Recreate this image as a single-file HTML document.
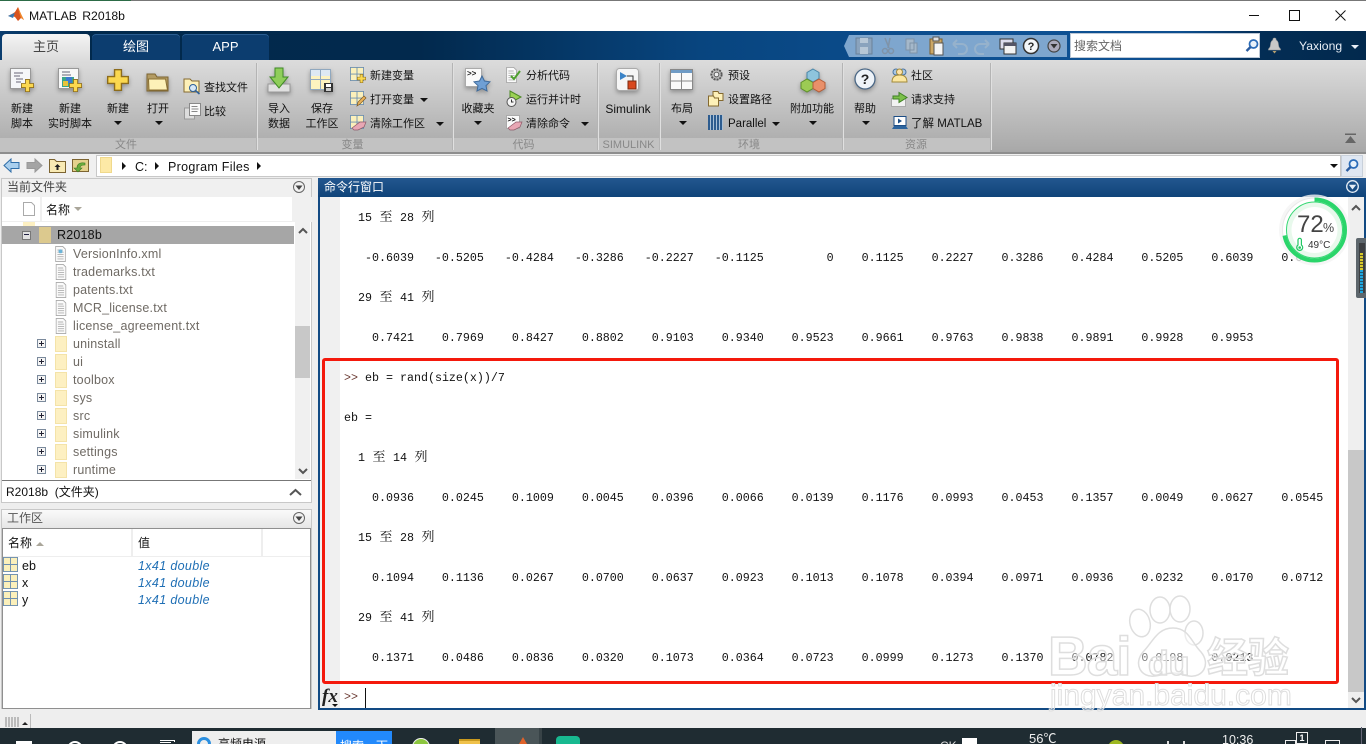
<!DOCTYPE html>
<html><head><meta charset="utf-8"><title>MATLAB R2018b</title>
<style>
html,body{margin:0;padding:0;background:#eee}
#r{position:relative;width:1366px;height:744px;overflow:hidden;background:#eeeeee;font-family:"Liberation Sans","Noto Sans CJK SC",sans-serif;font-size:11px;color:#111}
.a,.t,svg.i{position:absolute}
.s{filter:drop-shadow(0 2px 2px rgba(0,0,0,.3))}
.t{white-space:nowrap;line-height:14px}
.c{text-align:center}
.tri{position:absolute;width:0;height:0;border-left:4px solid transparent;border-right:4px solid transparent;border-top:4px solid #111;transform:translateX(1px)}
.sep{position:absolute;top:63px;width:1px;height:87px;background:#b4b4b4;border-right:1px solid #e0e0e0}
.foot{position:absolute;top:139px;height:12px;line-height:12px;color:#888;text-align:center;font-size:11px}
.tree{position:absolute;font-size:12.5px;letter-spacing:.2px;color:#6f6a64;white-space:nowrap;line-height:16px;left:73px}
.fold{position:absolute;left:55px;width:12px;height:16px;background:#fdf0c2;border:1px solid #f4e3a8;box-sizing:border-box}
.pm{position:absolute;left:37px;width:9px;height:9px;border:1px solid #7b8a9c;background:#f4f4f4;box-sizing:border-box}
.pm:before{content:"";position:absolute;left:1px;top:3px;width:5px;height:1px;background:#223}
.pm.p:after{content:"";position:absolute;left:3px;top:1px;width:1px;height:5px;background:#223}
pre{margin:0;font-family:"Liberation Mono",monospace;font-size:11.67px;line-height:20px;color:#111}
pre b{display:inline-block;width:14px;font-weight:normal;font-family:"Noto Serif CJK SC",serif;font-size:13px;line-height:14px;text-align:center}
pre i{font-style:normal;color:#6b3b33}
.ws{position:absolute;left:22px;font-size:12.5px;line-height:16px;color:#111}
.wv{position:absolute;left:138px;font-size:12.5px;letter-spacing:.35px;line-height:16px;color:#1f6fb5;font-style:italic}
</style></head><body><div id="r">
<svg width="0" height="0" style="position:absolute"><defs>
<symbol id="grid" viewBox="0 0 16 16"><rect x=".5" y=".5" width="15" height="15" fill="#fbf0bb" stroke="#6d8fb0"/><path d="M8 .5V15.500M.5 8H15.500" stroke="#6d8fb0"/></symbol>
<symbol id="plus" viewBox="0 0 16 16"><path d="M5.500 .5h5v5h5v5h-5v5h-5v-5h-5v-5h5z" fill="#fbd84f" stroke="#8d6c1c"/></symbol>
<symbol id="doc" viewBox="0 0 12 18"><path d="M.5 .5h8l3 3v14H.5z" fill="#fbfbfb" stroke="#a8a8a8"/><path d="M2.500 4.500h6M2.500 7h7M2.500 9.500h7M2.500 12h7M2.500 14.500h7" stroke="#b0b0b0"/></symbol>
<symbol id="gear" viewBox="0 0 16 16"><circle cx="8" cy="8" r="5.500" fill="#bbb" stroke="#555" stroke-width="2" stroke-dasharray="2.200 1"/><circle cx="8" cy="8" r="2.500" fill="#eee" stroke="#555"/></symbol>
</defs></svg>

<!-- title bar -->
<div class="a" style="left:0;top:0;width:1366px;height:31px;background:#fff"></div>
<div class="a" style="left:0;top:0;width:1366px;height:1px;background:#777"></div>
<div class="a" style="left:0;top:0;width:131px;height:1px;background:#2c6b46"></div>
<svg class="i" style="left:8px;top:7px" width="17" height="16" viewBox="0 0 17 16"><path d="M0 9l4-2 3-2 3-5 3 7 3 6-3-2-3 3-3-4-3-1z" fill="#d9541e"/><path d="M0 9l4-2 3-1-2 5z" fill="#3a78b0"/><path d="M10 0l3 7 3 6-3-2-2-6z" fill="#f08a2c"/></svg>
<div class="t" style="left:29px;top:9px;font-size:12.200px;word-spacing:2px;color:#111">MATLAB R2018b</div>
<div class="a" style="left:1249px;top:15px;width:10px;height:1px;background:#111"></div>
<div class="a" style="left:1289px;top:10px;width:9px;height:9px;border:1px solid #111"></div>
<svg class="i" style="left:1335px;top:10px" width="11" height="11"><path d="M.5 .5l10 10M10.500 .5l-10 10" stroke="#111"/></svg>

<!-- blue bar -->
<div class="a" style="left:0;top:31px;width:1366px;height:29px;background:linear-gradient(90deg,#0a3d6e 0,#01294c 90px,#02294d 420px,#08457f 700px,#0d5093 1000px,#0d4f90 1180px,#032d55 1260px,#02294d 1366px)"></div>
<div class="a c" style="left:2px;top:34px;width:88px;height:26px;line-height:26px;background:linear-gradient(#f4f4f4,#dcdcdc);border-radius:4px 4px 0 0;font-size:13px;color:#444">主页</div>
<div class="a c" style="left:92px;top:34px;width:88px;height:26px;line-height:26px;background:#0c3d6f;border-radius:4px 4px 0 0;font-size:13px;color:#fff;box-shadow:inset 0 1px 0 #2b5e92">绘图</div>
<div class="a c" style="left:182px;top:34px;width:87px;height:26px;line-height:26px;background:#0c3d6f;border-radius:4px 4px 0 0;font-size:13px;color:#fff;box-shadow:inset 0 1px 0 #2b5e92">APP</div>

<!-- quick access -->
<svg class="i" style="left:844px;top:35px" width="226" height="22" viewBox="0 0 226 22">
<path d="M5 0H223V22H5L0 11z" fill="#7ea6ce"/>
<path d="M12 3h16v16H12z" fill="#8aa3bd" stroke="#6a8199"/><path d="M16 3h8v5h-8zM16 12h8v7h-8z" fill="#b7c7d6"/>
<path d="M46 3l-2 10M41 3l4 10" stroke="#7f93a8" stroke-width="1.500"/><circle cx="41" cy="16" r="2.500" fill="none" stroke="#7f93a8" stroke-width="1.500"/><circle cx="47" cy="16" r="2.500" fill="none" stroke="#7f93a8" stroke-width="1.500"/>
<path d="M62 4h8v11h-8zM66 8h7v10h-7z" fill="#a5b8ca" stroke="#7f93a8"/>
<path d="M86 4h12v15H86z" fill="#cba766" stroke="#7c5e2c"/><path d="M90 8h9v12h-9z" fill="#f4f4f4" stroke="#555"/><path d="M89 2h6v4h-6z" fill="#ddd" stroke="#555"/>
<path d="M109 9h9a5 5 0 0 1 0 10h-4M109 9l4-4M109 9l4 4" fill="none" stroke="#96b2cc" stroke-width="2"/>
<path d="M145 9h-9a5 5 0 0 0 0 10h4M145 9l-4-4M145 9l-4 4" fill="none" stroke="#96b2cc" stroke-width="2"/>
<path d="M156 4h13v10h-13z" fill="#dde" stroke="#333"/><path d="M160 8h12v11h-12z" fill="#f3f3f3" stroke="#333"/><path d="M160 8h12v3h-12z" fill="#556"/>
<circle cx="187" cy="11" r="7.500" fill="#f4f6f8" stroke="#333" stroke-width="1.500"/><text x="187" y="15" font-size="11" font-weight="bold" text-anchor="middle" font-family="Liberation Sans" fill="#222">?</text>
<circle cx="210" cy="11" r="6" fill="#aab" stroke="#444" stroke-width="1.200"/><path d="M206.500 9h7l-3.500 4.500z" fill="#333"/>
</svg>
<div class="a" style="left:1070px;top:33px;width:190px;height:25px;background:#fff;border:1px solid #bcc8d6;box-sizing:border-box"></div>
<div class="t" style="left:1074px;top:39px;font-size:12px;color:#666">搜索文档</div>
<svg class="i" style="left:1244px;top:38px" width="16" height="16"><circle cx="9.500" cy="6" r="4" fill="#e8f1fa" stroke="#2b6cb8" stroke-width="1.800"/><path d="M6.500 9l-4 4" stroke="#2b5da0" stroke-width="2.400"/></svg>
<svg class="i" style="left:1266px;top:37px" width="17" height="18"><path d="M8.500 1a1.500 1.500 0 0 1 1.500 2c2 1 2.500 3 2.500 5 0 2 1 3 2 4v1h-12v-1c1-1 2-2 2-4 0-2 .5-4 2.500-5a1.500 1.500 0 0 1 1.500-2z" fill="#c8c8c8" stroke="#999" stroke-width=".6"/><path d="M6.500 14h4l-2 2.500z" fill="#b8a070"/></svg>
<div class="t" style="left:1299px;top:39px;font-size:12.200px;color:#e8eef6">Yaxiong</div>
<div class="tri" style="left:1350px;top:45px;border-top-color:#e8eef6"></div>

<!-- ribbon -->
<div class="a" style="left:0;top:60px;width:1366px;height:92px;background:linear-gradient(#dcdcdc,#a8a8a8)"></div>
<div class="a" style="left:0;top:138px;width:990px;height:14px;background:#c2c2c2"></div>
<div class="a" style="left:0;top:152px;width:1366px;height:2px;background:#8e8e8e;border-bottom:1px solid #ddd"></div>
<div class="sep" style="left:256px"></div><div class="sep" style="left:452px"></div><div class="sep" style="left:597px"></div><div class="sep" style="left:659px"></div><div class="sep" style="left:842px"></div><div class="sep" style="left:990px"></div>
<div class="foot" style="left:0;width:252px">文件</div>
<div class="foot" style="left:257px;width:191px">变量</div>
<div class="foot" style="left:453px;width:141px">代码</div>
<div class="foot" style="left:598px;width:61px">SIMULINK</div>
<div class="foot" style="left:660px;width:178px">环境</div>
<div class="foot" style="left:843px;width:146px">资源</div>
<svg class="i" style="left:1344px;top:133px" width="14" height="12"><path d="M1 .5h11v1.500H1zM6.500 3L1 10h11z" fill="#666"/></svg>

<!-- ribbon big icons -->
<svg class="i s" style="left:8px;top:66px" width="28" height="28" viewBox="0 0 28 28"><rect x="2.500" y="2.500" width="20" height="20" fill="#e8eef3" stroke="#999"/><rect x="3" y="3" width="19" height="19" fill="#f5f7f9"/><path d="M6 7h9M6 10h6M8 13h7M8 16h5" stroke="#667" stroke-width="1"/><use href="#plus" x="13" y="13" width="13" height="13"/></svg>
<svg class="i s" style="left:56px;top:66px" width="28" height="28" viewBox="0 0 28 28"><rect x="2.500" y="2.500" width="20" height="20" fill="#f8f8f8" stroke="#999"/><path d="M6 6h8M6 9h9" stroke="#667"/><rect x="6" y="11" width="12" height="10" fill="#3aa58a"/><rect x="10" y="11" width="6" height="6" fill="#3c79d0"/><rect x="7" y="15" width="5" height="5" fill="#e8c33a"/><use href="#plus" x="13" y="13" width="13" height="13"/></svg>
<svg class="i s" style="left:106px;top:69px" width="24" height="24"><use href="#plus" x="1" y="0" width="22" height="22"/></svg>
<svg class="i s" style="left:146px;top:73px" width="24" height="20" viewBox="0 0 24 20"><path d="M1 1h8l2 3h11v14H1z" fill="#b39b63" stroke="#7c6431"/><path d="M2.500 6h17l2 11H3z" fill="#fdf1b8" stroke="#8a7034"/></svg>
<svg class="i s" style="left:267px;top:67px" width="24" height="27" viewBox="0 0 24 27"><path d="M1 17h22v8H1z" fill="#e0e0e0" stroke="#999"/><path d="M8 1h8v9h5l-9 11-9-11h5z" fill="#8fce5a" stroke="#3f8a26"/></svg>
<svg class="i s" style="left:310px;top:69px" width="24" height="24" viewBox="0 0 24 24"><rect x=".5" y=".5" width="20" height="20" fill="#fdf3bf" stroke="#90a8bf"/><rect x="1" y="1" width="19" height="6" fill="#dde9f3"/><path d="M10.500 .5v20M.5 10.500h20" stroke="#90a8bf"/><rect x="14" y="14" width="9" height="9" fill="#333"/><rect x="16" y="15" width="5" height="3" fill="#fff"/><rect x="16" y="19" width="5" height="3" fill="#ccc"/></svg>
<svg class="i s" style="left:465px;top:68px" width="26" height="26" viewBox="0 0 26 26"><rect x=".5" y=".5" width="16" height="18" fill="#fafafa" stroke="#aaa"/><text x="2" y="8" font-size="8" font-family="Liberation Sans" font-weight="bold" fill="#222">&gt;&gt;</text><path d="M17 8l2.500 5 5.500.8-4 3.900 1 5.300-5-2.600-5 2.600 1-5.300-4-3.900 5.500-.8z" fill="#6f9fd4" stroke="#3f6a9a"/></svg>
<svg class="i s" style="left:616px;top:68px" width="24" height="24" viewBox="0 0 24 24"><rect x=".5" y=".5" width="22" height="22" rx="3" fill="#f6f6f6" stroke="#aaa"/><path d="M4 4l7 4-7 4z" fill="#3a83c7"/><path d="M11 8h6v5" fill="none" stroke="#333"/><rect x="12" y="13" width="8" height="8" fill="#d9481e" stroke="#7a2a10"/></svg>
<svg class="i s" style="left:670px;top:69px" width="24" height="22" viewBox="0 0 24 22"><rect x=".5" y=".5" width="22" height="20" fill="#fafafa" stroke="#888"/><rect x="1" y="1" width="21" height="3" fill="#6f9bc5"/><path d="M1 12h21M11.500 4v16" stroke="#888"/></svg>
<svg class="i s" style="left:800px;top:68px" width="26" height="26" viewBox="0 0 26 26"><path d="M13 1l6 3.500v6l-6 3.500-6-3.500v-6z" fill="#8ec4dd" stroke="#4a86a8"/><path d="M7 11l6 3.500v6l-6 3.500-6-3.500v-6z" fill="#9ccb54" stroke="#5d8f2a"/><path d="M19 11l6 3.500v6l-6 3.500-6-3.500v-6z" fill="#e9906a" stroke="#b25d38"/></svg>
<svg class="i s" style="left:853px;top:68px" width="24" height="24" viewBox="0 0 24 24"><circle cx="12" cy="11" r="10" fill="#eef3f8" stroke="#4a6785" stroke-width="1.300"/><text x="12" y="16" font-size="14" font-weight="bold" text-anchor="middle" font-family="Liberation Sans" fill="#222">?</text></svg>

<!-- big labels -->
<div class="t c" style="left:0;width:44px;top:102px">新建</div><div class="t c" style="left:0;width:44px;top:117px">脚本</div>
<div class="t c" style="left:46px;width:48px;top:102px">新建</div><div class="t c" style="left:46px;width:48px;top:117px">实时脚本</div>
<div class="t c" style="left:104px;width:28px;top:102px">新建</div><div class="tri" style="left:113px;top:121px"></div>
<div class="t c" style="left:144px;width:28px;top:102px">打开</div><div class="tri" style="left:154px;top:121px"></div>
<div class="t c" style="left:265px;width:28px;top:102px">导入</div><div class="t c" style="left:265px;width:28px;top:117px">数据</div>
<div class="t c" style="left:303px;width:38px;top:102px">保存</div><div class="t c" style="left:303px;width:38px;top:117px">工作区</div>
<div class="t c" style="left:458px;width:40px;top:102px">收藏夹</div><div class="tri" style="left:473px;top:121px"></div>
<div class="t c" style="left:599px;width:58px;top:102px;font-size:12px">Simulink</div>
<div class="t c" style="left:668px;width:28px;top:102px">布局</div><div class="tri" style="left:678px;top:121px"></div>
<div class="t c" style="left:786px;width:52px;top:102px">附加功能</div><div class="tri" style="left:808px;top:121px"></div>
<div class="t c" style="left:851px;width:28px;top:102px">帮助</div><div class="tri" style="left:861px;top:121px"></div>

<!-- small items -->
<svg class="i" style="left:183px;top:78px" width="18" height="17" viewBox="0 0 18 17"><path d="M1 1h6l2 2h7v11H1z" fill="#fdf0b8" stroke="#84692f"/><circle cx="10" cy="10" r="3.500" fill="#d7e8f6" stroke="#2c5f99"/><path d="M12.500 12.500l4 3.500" stroke="#2c5f99" stroke-width="1.600"/></svg>
<div class="t" style="left:204px;top:81px">查找文件</div>
<svg class="i" style="left:184px;top:103px" width="17" height="17" viewBox="0 0 17 17"><rect x=".5" y="5" width="10" height="11" fill="#ddd" stroke="#999"/><rect x="5.500" y=".5" width="11" height="12" fill="#fafafa" stroke="#888"/><path d="M7.500 3.500h6M7.500 6h7M7.500 8.500h6" stroke="#888"/></svg>
<div class="t" style="left:204px;top:105px">比较</div>

<svg class="i" style="left:350px;top:67px" width="16" height="16"><use href="#grid" width="14" height="14"/><use href="#plus" x="7" y="7" width="9" height="9"/></svg>
<div class="t" style="left:370px;top:69px">新建变量</div>
<svg class="i" style="left:350px;top:91px" width="17" height="16"><use href="#grid" width="14" height="14"/><path d="M7 15l1-4 6-6 2 2-6 6z" fill="#e9b15a" stroke="#7c5a22" stroke-width=".7"/></svg>
<div class="t" style="left:370px;top:93px">打开变量</div><div class="tri" style="left:419px;top:98px"></div>
<svg class="i" style="left:350px;top:115px" width="17" height="16"><use href="#grid" width="14" height="14"/><path d="M2 13l8-6h6l-2 5-6 3H4z" fill="#e8a7b4" stroke="#8c5a68" stroke-width=".7"/></svg>
<div class="t" style="left:370px;top:117px">清除工作区</div><div class="tri" style="left:435px;top:122px"></div>

<svg class="i" style="left:506px;top:67px" width="17" height="16"><use href="#doc" width="11" height="16"/><path d="M5 9l3 3 6-8" fill="none" stroke="#4ea02e" stroke-width="2"/></svg>
<div class="t" style="left:526px;top:69px">分析代码</div>
<svg class="i" style="left:506px;top:90px" width="17" height="18"><path d="M4 1l11 6-11 6z" fill="#9bd053" stroke="#4d8a24"/><circle cx="5.500" cy="12" r="4.500" fill="#f5f5f5" stroke="#555"/><path d="M5.500 9.500v2.500h2" stroke="#333" fill="none"/></svg>
<div class="t" style="left:526px;top:93px">运行并计时</div>
<svg class="i" style="left:506px;top:115px" width="17" height="16"><rect x=".5" y=".5" width="13" height="13" fill="#fafafa" stroke="#aaa"/><text x="1.500" y="7" font-size="7" font-weight="bold" font-family="Liberation Sans">&gt;&gt;</text><path d="M2 13l8-6h6l-2 5-6 3H4z" fill="#e8a7b4" stroke="#8c5a68" stroke-width=".7"/></svg>
<div class="t" style="left:526px;top:117px">清除命令</div><div class="tri" style="left:580px;top:122px"></div>

<svg class="i" style="left:709px;top:67px" width="15" height="15"><use href="#gear" width="15" height="15"/></svg>
<div class="t" style="left:728px;top:69px">预设</div>
<svg class="i" style="left:708px;top:91px" width="16" height="16"><path d="M5 .5h5l1 2h4v7H5z" fill="#fdf0b8" stroke="#84692f"/><path d="M.5 5h5l1 2h4v8H.5z" fill="#fdf0b8" stroke="#84692f"/></svg>
<div class="t" style="left:728px;top:93px">设置路径</div>
<div class="a" style="left:708px;top:115px;width:15px;height:15px;background:repeating-linear-gradient(90deg,#2d5c8f 0,#2d5c8f 2px,#a9c0d6 2px,#a9c0d6 3px)"></div>
<div class="t" style="left:728px;top:117px;font-size:11.500px">Parallel</div><div class="tri" style="left:771px;top:122px"></div>

<svg class="i" style="left:891px;top:67px" width="17" height="16"><circle cx="5" cy="5" r="3" fill="#a9c7e6" stroke="#4b74a0"/><circle cx="12" cy="5" r="3" fill="#a9c7e6" stroke="#4b74a0"/><path d="M1 15c0-5 3-7 7.500-7S16 10 16 15z" fill="#fbe6a0" stroke="#a28a3a"/><circle cx="8.500" cy="5" r="3" fill="#fde2a8" stroke="#a28a3a"/></svg>
<div class="t" style="left:911px;top:69px">社区</div>
<svg class="i" style="left:891px;top:91px" width="17" height="16"><rect x=".5" y="7.500" width="14" height="8" fill="#f2f2f2" stroke="#aaa"/><path d="M2 5h6V1.500l8 5-8 5V8H2z" fill="#7cc04a" stroke="#3e8024"/></svg>
<div class="t" style="left:911px;top:93px">请求支持</div>
<svg class="i" style="left:891px;top:116px" width="17" height="14"><rect x="3" y=".5" width="12" height="9" fill="#fff" stroke="#1d4e86"/><path d="M7 2.500l4 2.500-4 2.500z" fill="#1d4e86"/><path d="M1 13l2-3h12l2 3z" fill="#2c649e"/></svg>
<div class="t" style="left:911px;top:117px;font-size:11.500px">了解 MATLAB</div>

<!-- address bar -->
<div class="a" style="left:0;top:154px;width:1366px;height:23px;background:#f0f0f0"></div>
<svg class="i" style="left:3px;top:158px" width="17" height="15"><path d="M1 7.500L8 1v3.500h8v6H8V14z" fill="#a9cfee" stroke="#2e6da8"/></svg>
<svg class="i" style="left:26px;top:158px" width="17" height="15"><path d="M16 7.500L9 1v3.500H1v6h8V14z" fill="#a4a4a4" stroke="#999"/></svg>
<svg class="i" style="left:49px;top:158px" width="17" height="15"><path d="M.5 1.500h5l2 2h9v11H.5z" fill="#f8eab4" stroke="#7c6431"/><path d="M8.500 6l3 3h-2v3h-2V9h-2z" fill="#222"/></svg>
<svg class="i" style="left:72px;top:158px" width="17" height="15"><path d="M.5 1.500h16v12H.5z" fill="#e4d18c" stroke="#7c6431"/><path d="M13 5C8 4 5 6 5 10H2l4 4 4-4H8c0-2 2-3 5-3z" fill="#68ab3c" stroke="#3b7a22" stroke-width=".6"/></svg>
<div class="a" style="left:96px;top:155px;width:1245px;height:22px;background:#fff;border:1px solid #c8c8c8;box-sizing:border-box"></div>
<div class="a" style="left:100px;top:157px;width:12px;height:16px;background:#fde9a6;border:1px solid #f0d98c;box-sizing:border-box"></div>
<div class="a" style="left:122px;top:162px;border-left:4px solid #111;border-top:4px solid transparent;border-bottom:4px solid transparent"></div>
<div class="t" style="left:135px;top:160px;font-size:12.500px">C:</div>
<div class="a" style="left:155px;top:162px;border-left:4px solid #111;border-top:4px solid transparent;border-bottom:4px solid transparent"></div>
<div class="t" style="left:168px;top:160px;font-size:12.500px;letter-spacing:.3px">Program Files</div>
<div class="a" style="left:257px;top:162px;border-left:4px solid #111;border-top:4px solid transparent;border-bottom:4px solid transparent"></div>
<div class="tri" style="left:1329px;top:164px"></div>
<div class="a" style="left:1341px;top:155px;width:22px;height:22px;background:#dfe7f2;border:1px solid #c8d0da;box-sizing:border-box"></div>
<svg class="i" style="left:1344px;top:158px" width="16" height="16"><circle cx="9.500" cy="6" r="4" fill="#e8f1fa" stroke="#2b6cb8" stroke-width="1.800"/><path d="M6.500 9l-4 4" stroke="#2b5da0" stroke-width="2.400"/></svg>

<!-- left: current folder -->
<div class="a" style="left:1px;top:178px;width:311px;height:325px;background:#fff;border:1px solid #c8c8c8;box-sizing:border-box"></div>
<div class="a" style="left:2px;top:179px;width:309px;height:18px;background:#f0f0f0"></div>
<div class="t" style="left:7px;top:180px;font-size:12px;color:#444">当前文件夹</div>
<svg class="i" style="left:292px;top:180px" width="14" height="14"><circle cx="7" cy="7" r="5.500" fill="#f2f2f2" stroke="#666"/><path d="M3.500 5.500h7L7 10z" fill="#444"/></svg>
<div class="a" style="left:2px;top:197px;width:38px;height:25px;background:#fff;border-right:2px solid #f0f0f0"></div>
<svg class="i" style="left:23px;top:202px" width="12" height="14"><path d="M.5 .5h8l3 3v10H.5z" fill="#fff" stroke="#aaa"/></svg>
<div class="t" style="left:46px;top:203px;font-size:12px">名称</div>
<div class="a" style="left:74px;top:207px;border-left:4px solid transparent;border-right:4px solid transparent;border-top:4px solid #aaa69a"></div>
<div class="a" style="left:292px;top:197px;width:20px;height:25px;background:#f0f0f0"></div>
<div class="a" style="left:2px;top:221px;width:290px;height:1px;background:#eee"></div>
<div class="a" style="left:23px;top:222px;width:12px;height:4px;background:#fdf0c2"></div>
<div class="a" style="left:2px;top:226px;width:292px;height:18px;background:#a6a6a6"></div>
<div class="a" style="left:22px;top:231px;width:7px;height:7px;border:1px solid #777;background:#e2e2e2"></div>
<div class="a" style="left:24px;top:234px;width:5px;height:1px;background:#224"></div>
<div class="a" style="left:39px;top:227px;width:12px;height:16px;background:#dcc98e"></div>
<div class="t" style="left:57px;top:228px;font-size:12.500px;letter-spacing:.2px;color:#111">R2018b</div>

<svg class="i" style="left:54px;top:246px" width="13" height="16" viewBox="0 0 12 18"><use href="#doc" width="12" height="18"/><circle cx="6" cy="6" r="2.200" fill="#6cb4d8"/></svg>
<svg class="i" style="left:55px;top:264px" width="12" height="16" viewBox="0 0 12 18"><use href="#doc" width="12" height="18"/></svg>
<svg class="i" style="left:55px;top:282px" width="12" height="16" viewBox="0 0 12 18"><use href="#doc" width="12" height="18"/></svg>
<svg class="i" style="left:55px;top:300px" width="12" height="16" viewBox="0 0 12 18"><use href="#doc" width="12" height="18"/></svg>
<svg class="i" style="left:55px;top:318px" width="12" height="16" viewBox="0 0 12 18"><use href="#doc" width="12" height="18"/></svg>
<div class="tree" style="top:246px">VersionInfo.xml</div>
<div class="tree" style="top:264px">trademarks.txt</div>
<div class="tree" style="top:282px">patents.txt</div>
<div class="tree" style="top:300px">MCR_license.txt</div>
<div class="tree" style="top:318px">license_agreement.txt</div>

<div class="pm p" style="top:339px"></div><div class="fold" style="top:336px"></div><div class="tree" style="top:336px">uninstall</div>
<div class="pm p" style="top:357px"></div><div class="fold" style="top:354px"></div><div class="tree" style="top:354px">ui</div>
<div class="pm p" style="top:375px"></div><div class="fold" style="top:372px"></div><div class="tree" style="top:372px">toolbox</div>
<div class="pm p" style="top:393px"></div><div class="fold" style="top:390px"></div><div class="tree" style="top:390px">sys</div>
<div class="pm p" style="top:411px"></div><div class="fold" style="top:408px"></div><div class="tree" style="top:408px">src</div>
<div class="pm p" style="top:429px"></div><div class="fold" style="top:426px"></div><div class="tree" style="top:426px">simulink</div>
<div class="pm p" style="top:447px"></div><div class="fold" style="top:444px"></div><div class="tree" style="top:444px">settings</div>
<div class="pm p" style="top:465px"></div><div class="fold" style="top:462px"></div><div class="tree" style="top:462px">runtime</div>

<div class="a" style="left:295px;top:222px;width:15px;height:257px;background:#f0f0f0"></div>
<div class="a" style="left:295px;top:326px;width:15px;height:52px;background:#c8c8c8"></div>
<svg class="i" style="left:298px;top:227px" width="10" height="8"><path d="M1 6l4-4 4 4" fill="none" stroke="#555" stroke-width="2"/></svg>
<svg class="i" style="left:298px;top:467px" width="10" height="8"><path d="M1 2l4 4 4-4" fill="none" stroke="#555" stroke-width="2"/></svg>
<div class="a" style="left:2px;top:480px;width:309px;height:1px;background:#777"></div>
<div class="t" style="left:6px;top:485px;font-size:12px">R2018b&nbsp; (文件夹)</div>
<svg class="i" style="left:289px;top:487px" width="13" height="10"><path d="M1 8l5.500-5L12 8" fill="none" stroke="#555" stroke-width="2"/></svg>

<!-- workspace -->
<div class="a" style="left:1px;top:509px;width:311px;height:200px;background:#fff;border:1px solid #c8c8c8;box-sizing:border-box"></div>
<div class="a" style="left:2px;top:510px;width:309px;height:18px;background:linear-gradient(#fafafa,#e6e6e6)"></div>
<div class="t" style="left:7px;top:511px;font-size:12px;color:#555">工作区</div>
<svg class="i" style="left:292px;top:511px" width="14" height="14"><circle cx="7" cy="7" r="5.500" fill="#f2f2f2" stroke="#666"/><path d="M3.500 5.500h7L7 10z" fill="#444"/></svg>
<div class="a" style="left:2px;top:528px;width:309px;height:181px;border:1px solid #8f8f8f;box-sizing:border-box"></div>
<div class="a" style="left:3px;top:529px;width:307px;height:28px;background:#fff;border-bottom:1px solid #eee;box-sizing:border-box"></div>
<div class="a" style="left:131px;top:529px;width:2px;height:27px;background:#eee"></div>
<div class="a" style="left:261px;top:529px;width:2px;height:27px;background:#eee"></div>
<div class="t" style="left:8px;top:536px;font-size:12px">名称</div>
<div class="a" style="left:36px;top:542px;border-left:4px solid transparent;border-right:4px solid transparent;border-bottom:4px solid #aaa69a"></div>
<div class="t" style="left:138px;top:536px;font-size:12px">值</div>
<svg class="i" style="left:3px;top:557px" width="15" height="15"><use href="#grid" width="15" height="15"/></svg>
<svg class="i" style="left:3px;top:574px" width="15" height="15"><use href="#grid" width="15" height="15"/></svg>
<svg class="i" style="left:3px;top:591px" width="15" height="15"><use href="#grid" width="15" height="15"/></svg>
<div class="ws" style="top:558px">eb</div><div class="wv" style="top:558px">1x41 double</div>
<div class="ws" style="top:575px">x</div><div class="wv" style="top:575px">1x41 double</div>
<div class="ws" style="top:592px">y</div><div class="wv" style="top:592px">1x41 double</div>

<!-- command window -->
<div class="a" style="left:318px;top:178px;width:1048px;height:532px;background:#fff"></div>
<div class="a" style="left:318px;top:178px;width:1048px;height:19px;background:linear-gradient(#23578f,#0f4479)"></div>
<div class="t" style="left:324px;top:180px;font-size:12px;color:#fff">命令行窗口</div>
<svg class="i" style="left:1345px;top:179px" width="15" height="15"><circle cx="7.500" cy="7.500" r="5.800" fill="none" stroke="#e6eef6" stroke-width="1.300"/><path d="M3.800 5.800h7.400l-3.700 4.700z" fill="#e6eef6"/></svg>
<div class="a" style="left:318px;top:197px;width:2px;height:513px;background:#124a83"></div>
<div class="a" style="left:1364px;top:197px;width:2px;height:513px;background:#124a83"></div>
<div class="a" style="left:318px;top:708px;width:1048px;height:2px;background:#124a83"></div>
<div class="a" style="left:320px;top:197px;width:20px;height:489px;background:#f0f0f0"></div>
<div class="a" style="left:1348px;top:197px;width:16px;height:511px;background:#efefef"></div>
<div class="a" style="left:1348px;top:450px;width:16px;height:242px;background:#c8c8c8"></div>
<svg class="i" style="left:1351px;top:204px" width="10" height="8"><path d="M1 6l4-4 4 4" fill="none" stroke="#555" stroke-width="2"/></svg>
<svg class="i" style="left:1351px;top:696px" width="10" height="8"><path d="M1 2l4 4 4-4" fill="none" stroke="#555" stroke-width="2"/></svg>

<div class="a" style="left:344px;top:197px;width:1000px;height:489px;overflow:hidden">
<pre style="position:absolute;left:0;top:11px">  15 <b>至</b> 28 <b>列</b>

   -0.6039   -0.5205   -0.4284   -0.3286   -0.2227   -0.1125         0    0.1125    0.2227    0.3286    0.4284    0.5205    0.6039    0.6778

  29 <b>至</b> 41 <b>列</b>

    0.7421    0.7969    0.8427    0.8802    0.9103    0.9340    0.9523    0.9661    0.9763    0.9838    0.9891    0.9928    0.9953

<i>&gt;&gt;</i> eb = rand(size(x))/7

eb =

  1 <b>至</b> 14 <b>列</b>

    0.0936    0.0245    0.1009    0.0045    0.0396    0.0066    0.0139    0.1176    0.0993    0.0453    0.1357    0.0049    0.0627    0.0545

  15 <b>至</b> 28 <b>列</b>

    0.1094    0.1136    0.0267    0.0700    0.0637    0.0923    0.1013    0.1078    0.0394    0.0971    0.0936    0.0232    0.0170    0.0712

  29 <b>至</b> 41 <b>列</b>

    0.1371    0.0486    0.0836    0.0320    0.1073    0.0364    0.0723    0.0999    0.1273    0.1370    0.0782    0.0198    0.0213</pre>
</div>

<!-- red box -->
<div class="a" style="left:322px;top:358px;width:1017px;height:326px;border:3px solid #f4190c;border-radius:3px;box-sizing:border-box"></div>

<!-- prompt -->
<div class="a" style="left:320px;top:686px;width:20px;height:22px;background:#f0f0f0"></div>
<div class="t" style="left:322px;top:688px;font-family:'Liberation Serif',serif;font-size:19px;font-style:italic;font-weight:bold;color:#222;line-height:18px">fx</div>
<div class="a" style="left:332px;top:704px;border-left:3px solid transparent;border-right:3px solid transparent;border-top:3px solid #111"></div>
<pre style="position:absolute;left:344px;top:687px"><i>&gt;&gt;</i></pre>
<div class="a" style="left:365px;top:688px;width:1px;height:20px;background:#111"></div>

<!-- gauge -->
<svg class="i" style="left:1278px;top:194px" width="72" height="72" viewBox="0 0 72 72">
<circle cx="36.500" cy="36" r="35.500" fill="#f4f4f4" opacity=".8"/>
<circle cx="36.500" cy="36" r="32" fill="#fff" stroke="#e9e9e9" stroke-width="1"/>
<circle cx="36.500" cy="36" r="28" fill="#e8f9ec"/>
<circle cx="36.500" cy="36" r="23" fill="#fff"/>
<circle cx="36.500" cy="36" r="30.500" fill="none" stroke="#2ad56a" stroke-width="4" stroke-dasharray="138 191.700" transform="rotate(-90 36.500 36)"/>
<circle cx="36.500" cy="36" r="28" fill="none" stroke="#35d873" stroke-width="1"/>
<text x="19" y="38" font-size="24" font-family="Liberation Sans" fill="#444">72</text>
<text x="45" y="38" font-size="12.500" font-family="Liberation Sans" fill="#444">%</text>
<path d="M20 46a1.700 1.700 0 0 1 3.400 0v5a3 3 0 1 1-3.400 0z" fill="none" stroke="#22c763" stroke-width="1.200"/>
<circle cx="21.700" cy="53.500" r="1.300" fill="#22c763"/>
<text x="30" y="54" font-size="10" font-family="Liberation Sans" fill="#333">49°C</text>
</svg>
<div class="a" style="left:1356px;top:238px;width:10px;height:60px;background:#5d666c;border-radius:2px 0 0 2px"></div>
<div class="a" style="left:1359px;top:243px;width:6px;height:50px;background:#3c3f42"></div>
<div class="a" style="left:1360px;top:253px;width:3px;height:17px;background:repeating-linear-gradient(#d8c92a 0,#d8c92a 2px,#5d5a2a 2px,#5d5a2a 3px)"></div>
<div class="a" style="left:1360px;top:270px;width:3px;height:23px;background:repeating-linear-gradient(#1da6df 0,#1da6df 2px,#1d5a78 2px,#1d5a78 3px)"></div>

<!-- watermark -->
<svg class="i" style="left:1040px;top:590px" width="270" height="130" viewBox="0 0 270 130" font-family="Liberation Sans">
<g fill="#fff" fill-opacity=".45" stroke="#dedede" stroke-width="1.500">
<ellipse cx="100" cy="33" rx="10" ry="14" transform="rotate(-15 100 33)"/>
<ellipse cx="120" cy="20" rx="10" ry="13"/>
<ellipse cx="140" cy="19" rx="10" ry="13"/>
<ellipse cx="154" cy="43" rx="9" ry="12"/>
<path d="M133 38c16 0 18 14 28 24 10 12 2 26-12 24-8-1-10-3-16-3s-10 2-18 3c-14 2-22-12-12-24 10-10 14-24 30-24z"/>
<text x="8" y="85" font-size="55" font-weight="bold" letter-spacing="-1">Bai</text>
<text x="108" y="85" font-size="34" font-weight="bold">du</text>
<text x="167" y="82" font-size="41" font-family="Noto Sans CJK SC" font-weight="bold">经验</text>
<text x="10" y="115" font-size="30" stroke-width="1">jingyan.baidu.com</text>
</g></svg>

<!-- status bar -->
<div class="a" style="left:5px;top:717px;width:15px;height:10px;background:repeating-linear-gradient(90deg,#bbb 0,#bbb 2px,#eee 2px,#eee 3px)"></div>
<div class="a" style="left:22px;top:722px;border-left:3px solid transparent;border-right:3px solid transparent;border-bottom:3px solid #222"></div>
<div class="a" style="left:30px;top:714px;width:1px;height:14px;background:#bbb"></div>

<!-- taskbar -->
<div class="a" style="left:0;top:728px;width:1366px;height:16px;background:#1f2c32"></div>
<div class="a" style="left:16px;top:741px;width:16px;height:3px;background:#fff"></div>
<div class="a" style="left:67px;top:741px;width:12px;height:12px;border:2px solid #fff;border-radius:50%"></div>
<div class="a" style="left:112px;top:741px;width:12px;height:12px;border:2px solid #fff;border-radius:50%"></div>
<div class="a" style="left:160px;top:740px;width:15px;height:2px;border-top:1px solid #fff;border-right:1px solid #fff;box-sizing:border-box"></div>
<div class="a" style="left:160px;top:742px;width:11px;height:1px;background:#fff"></div>
<div class="a" style="left:192px;top:731px;width:144px;height:13px;background:#eee;overflow:hidden"><div class="t" style="left:26px;top:6px;font-size:12px;color:#111">高频电源</div><div class="a" style="left:5px;top:6px;width:14px;height:14px;border:3px solid #2b8fe0;border-radius:50%;box-sizing:border-box"></div></div>
<div class="a c" style="left:336px;top:731px;width:56px;height:13px;background:#2289fb;color:#fff;font-size:12px;line-height:30px;overflow:hidden">搜索一下</div>
<div class="a" style="left:412px;top:738px;width:18px;height:18px;border-radius:50%;background:#8cc63f;border:1px solid #eee;box-sizing:border-box"></div>
<div class="a" style="left:459px;top:739px;width:21px;height:5px;background:#f0c24b;border-top:2px solid #c99a1e;box-sizing:border-box"></div>
<div class="a" style="left:495px;top:728px;width:44px;height:16px;background:#4a5558"></div>
<div class="a" style="left:539px;top:728px;width:3px;height:16px;background:#384347"></div>
<div class="a" style="left:519px;top:737px;border-left:4px solid transparent;border-right:4px solid transparent;border-bottom:7px solid #e0622a"></div>
<div class="a" style="left:556px;top:736px;width:24px;height:8px;background:#18b990;border-radius:4px 4px 0 0"></div>
<div class="t" style="left:940px;top:739px;color:#ddd;font-size:12px">CK</div>
<div class="a" style="left:962px;top:738px;width:15px;height:6px;background:#fff"></div>
<div class="t" style="left:1029px;top:732px;color:#eee;font-size:13px">56℃</div>
<div class="a" style="left:1108px;top:740px;width:16px;height:16px;border-radius:50%;background:#9db820"></div>
<div class="a" style="left:1167px;top:741px;width:2px;height:3px;background:#ddd"></div>
<div class="a" style="left:1183px;top:741px;width:2px;height:3px;background:#ddd"></div>
<div class="t" style="left:1222px;top:733px;color:#eee;font-size:12.500px">10:36</div>
<div class="a" style="left:1285px;top:740px;width:11px;height:4px;border:1px solid #eee;border-bottom:0;box-sizing:border-box"></div>
<div class="a" style="left:1296px;top:732px;width:12px;height:12px;border:1px solid #eee;box-sizing:border-box;color:#fff;font-size:9px;line-height:10px;text-align:center;font-weight:bold">1</div>
<div class="a" style="left:1325px;top:740px;width:13px;height:8px;border:1px solid #eee"></div>
<div class="a" style="left:1361px;top:727px;width:1px;height:17px;background:#667"></div>
</div></body></html>
